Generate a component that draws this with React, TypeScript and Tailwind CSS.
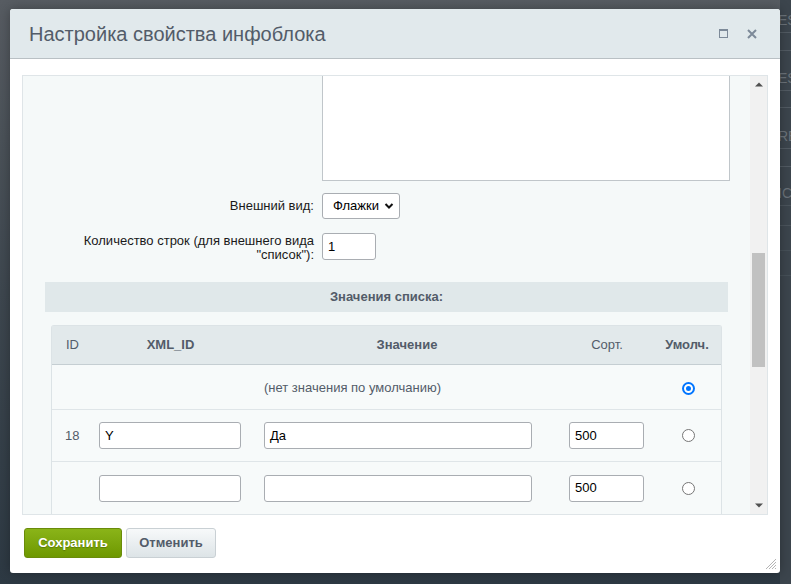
import React from "react";

const font = "font-['Liberation_Sans',Arial,sans-serif]";

function Radio({ checked }: { checked?: boolean }) {
  return checked ? (
    <span className="w-[13px] h-[13px] rounded-full bg-[#0075ff] flex items-center justify-center">
      <span className="w-[9px] h-[9px] rounded-full border-2 border-white bg-[#0075ff]" />
    </span>
  ) : (
    <span className="w-[13px] h-[13px] rounded-full border border-[#767676] bg-white" />
  );
}

function TextInput({ value, w }: { value?: string; w: string }) {
  return (
    <div
      className={`${w} h-[27px] rounded-[3px] border border-[#a9adb2] bg-white flex items-center pl-[5px] text-[13px] text-black`}
    >
      {value}
    </div>
  );
}

export default function App() {
  return (
    <div
      className={`relative w-[791px] h-[584px] overflow-hidden bg-gradient-to-b from-[#575c62] via-[#3e474f] to-[#2d3943] ${font}`}
    >
      {/* background page strip on the right */}
      <div className="absolute left-[780px] top-0 w-[11px] h-full bg-[#3c454d] overflow-hidden">
        <div className="absolute top-[13px] left-[-2px] text-[14px] text-[#6b737a] leading-none">ES</div>
        <div className="absolute top-[32px] left-0 w-full h-px bg-[#525b63]" />
        <div className="absolute top-[50px] left-0 w-full h-px bg-[#525b63]" />
        <div className="absolute top-[71px] left-[-2px] text-[14px] text-[#6b737a] leading-none">ES</div>
        <div className="absolute top-[90px] left-0 w-full h-px bg-[#525b63]" />
        <div className="absolute top-[107px] left-0 w-full h-px bg-[#525b63]" />
        <div className="absolute top-[129px] left-[-2px] text-[14px] text-[#6b737a] leading-none">RE</div>
        <div className="absolute top-[148px] left-0 w-full h-px bg-[#525b63]" />
        <div className="absolute top-[166px] left-0 w-full h-px bg-[#525b63]" />
        <div className="absolute top-[186px] left-[-2px] text-[14px] text-[#6b737a] leading-none">IC</div>
        <div className="absolute top-[205px] left-0 w-full h-px bg-[#4b545c]" />
        <div className="absolute top-[225px] left-0 w-full h-px bg-[#4b545c]" />
        <div className="absolute top-[250px] left-0 w-full h-px bg-[#465058]" />
        <div className="absolute top-[275px] left-0 w-full h-px bg-[#465058]" />
      </div>

      {/* dialog */}
      <div className="absolute left-[10px] top-[9px] w-[770px] h-[564px] rounded-[3px] bg-white flex flex-col overflow-hidden shadow-[0_0_12px_rgba(0,0,0,0.3)]">
        {/* header */}
        <div className="h-[50px] shrink-0 bg-[#e1e9ec] border-b border-[#b9c0c4] flex items-center pl-[19px] pr-[23px]">
          <div className="flex-1 text-[20px] text-[#535c69] leading-none pt-[1px]">
            Настройка свойства инфоблока
          </div>
          <div className="flex items-center gap-[19px]">
            <span className="w-[9px] h-[9px] border-[1.5px] border-[#7d8a99] border-t-[2px]" />
            <svg width="10" height="10" viewBox="0 0 10 10">
              <path d="M1 1 L9 9 M9 1 L1 9" stroke="#7d8a99" strokeWidth="2" />
            </svg>
          </div>
        </div>

        {/* body */}
        <div className="flex-1 flex flex-col pt-[16px] pl-[12px] pr-[12px]">
          <div className="h-[440px] w-[746px] border border-[#dfe5e8] flex">
            {/* content */}
            <div className="flex-1 bg-[#f5f9f9] overflow-hidden flex flex-col">
              <div className="grid grid-cols-[292px_auto] gap-x-[7px]">
                <div />
                <div className="w-[408px] h-[105px] bg-white border-x border-b border-[#c0c6ca]" />
              </div>

              <div className="grid grid-cols-[292px_auto] gap-x-[7px] items-center mt-[12px]">
                <div className="text-right text-[13px] text-[#1a1a1a] pr-[1px]">Внешний вид:</div>
                <div className="w-[78px] h-[26px] rounded-[3px] border border-[#a9adb2] bg-white flex items-center pl-[10px] pr-[5px] text-[13px] text-black">
                  <span className="flex-1">Флажки</span>
                  <svg width="10" height="8" viewBox="0 0 10 8">
                    <path d="M1.5 2 L5 5.5 L8.5 2" stroke="#111" strokeWidth="2" fill="none" />
                  </svg>
                </div>
              </div>

              <div className="grid grid-cols-[292px_auto] gap-x-[7px] items-start mt-[14px]">
                <div className="text-right text-[13px] leading-[14px] text-[#1a1a1a] pr-[1px] pt-[1px]">
                  Количество строк (для внешнего вида
                  <br />
                  "список"):
                </div>
                <div className="w-[54px] h-[27px] rounded-[3px] border border-[#a9adb2] bg-white flex items-center pl-[5px] text-[13px] text-black">
                  1
                </div>
              </div>

              <div className="mt-[20px] mx-[22px] h-[34px] bg-[#e0e8ea] flex items-center justify-center text-[13px] font-bold text-[#535c69]">
                Значения списка:
              </div>

              <div className="mt-[13px] mx-[28px] border-x border-t border-[#dce3e6] rounded-t-[3px] text-[13px] text-[#535c69]">
                {/* header */}
                <div className="grid grid-cols-[36px_165px_308px_92px_68px] h-[39px] bg-[#e2e9eb] border-b border-[#c5ced2] items-center">
                  <div className="pl-[14px]">ID</div>
                  <div className="text-center font-bold">XML_ID</div>
                  <div className="text-center font-bold">Значение</div>
                  <div className="text-center">Сорт.</div>
                  <div className="text-center font-bold">Умолч.</div>
                </div>
                {/* row 1 */}
                <div className="grid grid-cols-[36px_165px_308px_92px_68px] h-[45px] bg-[#f7fafa] border-b border-[#dfe5e8] items-center">
                  <div className="col-span-4 text-center pt-[2px]">(нет значения по умолчанию)</div>
                  <div className="flex justify-center pl-[2px] pt-[2px]">
                    <Radio checked />
                  </div>
                </div>
                {/* row 2 */}
                <div className="grid grid-cols-[36px_165px_308px_92px_68px] h-[52px] bg-[#f7fafa] border-b border-[#dfe5e8] items-center">
                  <div className="pl-[13px]">18</div>
                  <div className="pl-[11px]">
                    <TextInput value="Y" w="w-[142px]" />
                  </div>
                  <div className="pl-[11px]">
                    <TextInput value="Да" w="w-[268px]" />
                  </div>
                  <div className="pl-[8px]">
                    <TextInput value="500" w="w-[75px]" />
                  </div>
                  <div className="flex justify-center pl-[2px]">
                    <Radio />
                  </div>
                </div>
                {/* row 3 */}
                <div className="grid grid-cols-[36px_165px_308px_92px_68px] h-[52px] bg-[#f7fafa] items-center">
                  <div />
                  <div className="pl-[11px]">
                    <TextInput w="w-[142px]" />
                  </div>
                  <div className="pl-[11px]">
                    <TextInput w="w-[268px]" />
                  </div>
                  <div className="pl-[8px]">
                    <TextInput value="500" w="w-[75px]" />
                  </div>
                  <div className="flex justify-center pl-[2px]">
                    <Radio />
                  </div>
                </div>
              </div>
            </div>

            {/* scrollbar */}
            <div className="w-[17px] bg-[#f1f1f1] flex flex-col items-center">
              <div className="h-[17px] flex items-center justify-center">
                <svg width="8" height="5" viewBox="0 0 8 5">
                  <path d="M0 4.5 L4 0.5 L8 4.5 Z" fill="#505050" />
                </svg>
              </div>
              <div className="h-[160px]" />
              <div className="w-[13px] h-[114px] bg-[#c1c1c1]" />
              <div className="flex-1" />
              <div className="h-[17px] flex items-center justify-center">
                <svg width="8" height="5" viewBox="0 0 8 5">
                  <path d="M0 0.5 L4 4.5 L8 0.5 Z" fill="#505050" />
                </svg>
              </div>
            </div>
          </div>

          {/* buttons */}
          <div className="mt-[13px] ml-[2px] flex gap-[4px]">
            <div className="w-[98px] h-[30px] rounded-[3px] border border-[#6a8b0a] bg-gradient-to-b from-[#8ab418] to-[#6e9800] flex items-center justify-center text-[13px] font-bold text-white [text-shadow:0_1px_1px_rgba(0,0,0,0.25)]">
              Сохранить
            </div>
            <div className="w-[90px] h-[30px] rounded-[3px] border border-[#c9d0d4] bg-gradient-to-b from-[#f7f9fa] to-[#dde4e7] flex items-center justify-center text-[13px] font-bold text-[#535c69]">
              Отменить
            </div>
          </div>
        </div>

        {/* resize grip */}
        <div className="absolute right-[3px] bottom-[3px]">
          <svg width="12" height="12" viewBox="0 0 12 12">
            <path d="M11 1 L1 11 M11 4 L4 11 M11 7 L7 11 M11 10 L10 11" stroke="#b5b5b5" strokeWidth="1" />
          </svg>
        </div>
      </div>
    </div>
  );
}
